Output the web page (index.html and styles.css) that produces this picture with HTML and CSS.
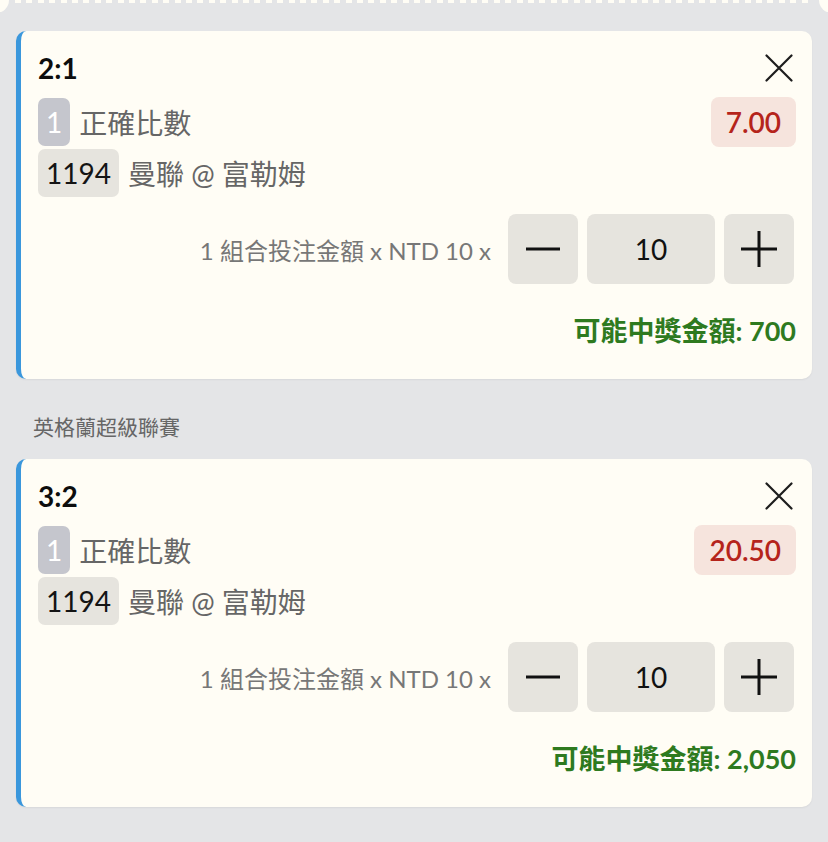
FILE: index.html
```html
<!DOCTYPE html>
<html lang="zh-Hant">
<head>
<meta charset="utf-8">
<title>投注單</title>
<link rel="stylesheet" href="styles.css">
</head>
<body>
<div class="ticket-end"></div>
<main class="slip">
  <section class="bet">
    <div class="bet-head">
      <span class="score">2:1</span>
      <button class="close" aria-label="關閉">
        <svg width="28" height="28" viewBox="0 0 28 28"><path d="M1.5 1.5 L26.5 26.5 M26.5 1.5 L1.5 26.5" stroke="#1d1d1d" stroke-width="2.2" fill="none" stroke-linecap="round"/></svg>
      </button>
    </div>
    <div class="row market-row">
      <span class="tag tag-leg">1</span>
      <span class="market">正確比數</span>
      <span class="odds">7.00</span>
    </div>
    <div class="row">
      <span class="tag tag-code">1194</span>
      <span class="market">曼聯 @ 富勒姆</span>
    </div>
    <div class="stake">
      <span class="stake-label">1 組合投注金額 x NTD 10 x</span>
      <div class="stepper">
        <button class="step" aria-label="減少"><svg width="36" height="36" viewBox="0 0 36 36"><path d="M1 18 H35" stroke="#111" stroke-width="3"/></svg></button>
        <span class="amount">10</span>
        <button class="step" aria-label="增加"><svg width="36" height="36" viewBox="0 0 36 36"><path d="M0 18 H36 M18 0 V36" stroke="#111" stroke-width="3"/></svg></button>
      </div>
    </div>
    <div class="win">可能中獎金額: 700</div>
  </section>

  <h2 class="league">英格蘭超級聯賽</h2>

  <section class="bet">
    <div class="bet-head">
      <span class="score">3:2</span>
      <button class="close" aria-label="關閉">
        <svg width="28" height="28" viewBox="0 0 28 28"><path d="M1.5 1.5 L26.5 26.5 M26.5 1.5 L1.5 26.5" stroke="#1d1d1d" stroke-width="2.2" fill="none" stroke-linecap="round"/></svg>
      </button>
    </div>
    <div class="row market-row">
      <span class="tag tag-leg">1</span>
      <span class="market">正確比數</span>
      <span class="odds">20.50</span>
    </div>
    <div class="row">
      <span class="tag tag-code">1194</span>
      <span class="market">曼聯 @ 富勒姆</span>
    </div>
    <div class="stake">
      <span class="stake-label">1 組合投注金額 x NTD 10 x</span>
      <div class="stepper">
        <button class="step" aria-label="減少"><svg width="36" height="36" viewBox="0 0 36 36"><path d="M1 18 H35" stroke="#111" stroke-width="3"/></svg></button>
        <span class="amount">10</span>
        <button class="step" aria-label="增加"><svg width="36" height="36" viewBox="0 0 36 36"><path d="M0 18 H36 M18 0 V36" stroke="#111" stroke-width="3"/></svg></button>
      </div>
    </div>
    <div class="win">可能中獎金額: 2,050</div>
  </section>
</main>
</body>
</html>
```

FILE: styles.css
```css
* { box-sizing: border-box; }

html, body {
  margin: 0;
  padding: 0;
}

body {
  background: #e4e5e7;
  font-family: Lato, "Noto Sans CJK TC", "Noto Sans", sans-serif;
  color: #111;
  width: 828px;
  height: 842px;
  overflow: hidden;
}

.ticket-end {
  position: relative;
  height: 12px;
  margin-bottom: 19px;
  overflow: hidden;
  background:
    repeating-linear-gradient(90deg, #fffdf5 0 6px, transparent 6px 11.4px) 15px 0 / 797px 3px no-repeat;
}

.ticket-end::before,
.ticket-end::after {
  content: "";
  position: absolute;
  top: -13px;
  width: 26px;
  height: 26px;
  border-radius: 50%;
  background: #fffdf5;
}

.ticket-end::before { left: -17px; }
.ticket-end::after { right: -17px; }

.slip {
  padding: 0 16px 34px;
}

.bet {
  background: #fffdf5;
  border-left: 5px solid #3a97dc;
  border-radius: 10px;
  padding: 19px 16px 30px 17px;
  box-shadow: 0 1px 2px rgba(0, 0, 0, 0.06);
}

.bet-head {
  display: flex;
  align-items: center;
  justify-content: space-between;
  height: 36px;
}

.score {
  font-size: 28px;
  font-weight: 700;
  color: #0d0d0d;
}

.close {
  border: 0;
  background: none;
  padding: 0;
  margin-right: 3px;
  width: 28px;
  height: 28px;
  display: flex;
}

.row {
  display: flex;
  align-items: center;
  gap: 9px;
  height: 48px;
  margin-top: 3px;
}

.market-row {
  margin-top: 12px;
}

.tag {
  height: 48px;
  display: flex;
  align-items: center;
  padding: 0 8px;
  border-radius: 7px;
  font-size: 28px;
}

.tag-leg {
  background: #c5c6cd;
  color: #fff;
}

.tag-code {
  background: #e6e4de;
  color: #141414;
}

.market {
  font-size: 28px;
  color: #666;
}

.odds {
  margin-left: auto;
  height: 50px;
  display: flex;
  align-items: center;
  padding: 0 15px;
  background: #f6e4dd;
  color: #b5241b;
  border-radius: 8px;
  font-size: 28px;
  font-weight: 600;
}

.stake {
  display: flex;
  align-items: center;
  justify-content: flex-end;
  gap: 17px;
  margin-top: 17px;
  margin-right: 2px;
}

.stake-label {
  font-size: 24px;
  color: #777;
}

.stepper {
  display: flex;
  gap: 9px;
}

.step {
  width: 70px;
  height: 70px;
  border: 0;
  padding: 0;
  border-radius: 8px;
  background: #e6e4de;
  display: flex;
  align-items: center;
  justify-content: center;
}

.amount {
  width: 128px;
  height: 70px;
  border-radius: 8px;
  background: #e6e4de;
  display: flex;
  align-items: center;
  justify-content: center;
  font-size: 28px;
  color: #111;
}

.win {
  margin-top: 29px;
  text-align: right;
  line-height: 36px;
  font-size: 27px;
  font-weight: 700;
  color: #2e7a1f;
}

.league {
  margin: 33px 0 17px 17px;
  line-height: 30px;
  font-size: 21px;
  font-weight: 400;
  color: #666;
}
```
